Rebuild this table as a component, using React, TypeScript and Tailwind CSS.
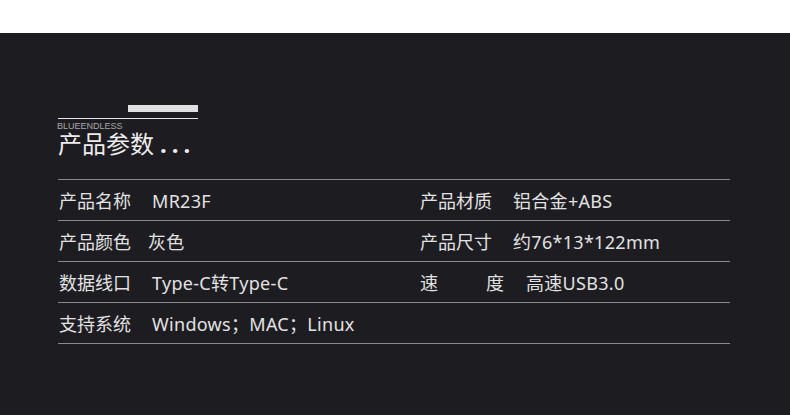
import React from 'react';

const font = { fontFamily: '"Noto Sans", "Noto Sans CJK SC", sans-serif' };

interface Cell {
  label: React.ReactNode;
  value: string;
  valueClass?: string;
}

const rows: [Cell, Cell | null][] = [
  [
    { label: '产品名称', value: 'MR23F' },
    { label: '产品材质', value: '铝合金+ABS' },
  ],
  [
    { label: '产品颜色', value: '灰色', valueClass: 'ml-[17px]' },
    { label: '产品尺寸', value: '约76*13*122mm' },
  ],
  [
    { label: '数据线口', value: 'Type-C转Type-C' },
    {
      label: (
        <span className="flex w-[84px] justify-between">
          <span>速</span>
          <span>度</span>
        </span>
      ),
      value: '高速USB3.0',
      valueClass: 'ml-[22px]',
    },
  ],
  [{ label: '支持系统', value: 'Windows；MAC；Linux' }, null],
];

function SpecCell({ cell }: { cell: Cell | null }) {
  if (!cell) return <div />;
  return (
    <div className="flex items-center text-[18px] leading-[24px] text-[#e2e2e2]">
      <span className="shrink-0">{cell.label}</span>
      <span className={`${cell.valueClass ?? 'ml-[21px]'} tracking-[0.3px]`}>{cell.value}</span>
    </div>
  );
}

export default function App() {
  return (
    <div className="w-[790px] h-[415px] overflow-hidden bg-white" style={font}>
      <div className="h-[33px] bg-white" />
      <div className="h-[382px] bg-[#1d1c21] pt-[72px]">
        <div className="ml-[58px] w-[672px]">
          {/* heading */}
          <div className="w-[140px]">
            <div className="ml-[70px] h-[7px] w-[70px] bg-[#e0e0e0]" />
            <div className="mt-[6px] h-px w-full bg-[#e6e6e6]" />
          </div>
          <div
            className="-ml-px mt-[2px] h-[10px] text-[9px] leading-[10px] text-[#a8a8a8]"
            style={{ fontFamily: '"Liberation Sans", sans-serif' }}
          >
            BLUEENDLESS
          </div>
          <div className="mt-[1px] flex h-[24px] items-center text-[24px] leading-[24px] text-[#ededed]">
            <span>产品参数</span>
            <span className="ml-[6px] font-bold tracking-[5px]">...</span>
          </div>

          {/* spec table */}
          <div className="mt-[23px] border-b border-[#8a8a8a]">
            {rows.map(([left, right], i) => (
              <div
                key={i}
                className="grid h-[41px] grid-cols-[361px_1fr] items-center border-t border-[#8a8a8a] pl-px pt-[2px]"
              >
                <SpecCell cell={left} />
                <SpecCell cell={right} />
              </div>
            ))}
          </div>
        </div>
      </div>
    </div>
  );
}
